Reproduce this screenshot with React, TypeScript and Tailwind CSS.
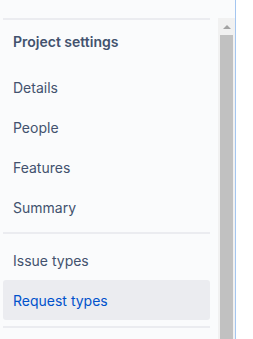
const font = { fontFamily: '"Segoe UI", Inter, "Noto Sans", sans-serif' };

function Item({ label, active }: { label: string; active?: boolean }) {
  return (
    <div
      className={
        "flex h-[40px] items-center rounded-[3px] px-[10px] text-[14px] " +
        (active ? "bg-[#ebecf0] text-[#0052cc]" : "text-[#42526e]")
      }
    >
      {label}
    </div>
  );
}

export default function App() {
  return (
    <div className="flex h-[339px] w-[253px] overflow-hidden bg-white" style={font}>
      <div className="flex w-[235px] bg-[#fafbfc]">
        <div className="flex w-[218px] flex-col overflow-hidden pl-[3px] pr-[8px]">
          {/* header, scrolled out of view */}
          <div className="-mt-[22px] flex h-[40px] shrink-0 items-end gap-[10px] pb-[18px] pl-[16px]">
            <div className="h-[24px] w-[24px] shrink-0 rounded-full bg-[#42526e]" />
            <span className="text-[14px] leading-[16px] font-semibold whitespace-nowrap text-[#42526e]">
              Service project
            </span>
          </div>
          <div className="h-[2px] shrink-0 bg-[#ebecf0]" />
          <div className="mb-[5px] flex h-[42px] shrink-0 items-center px-[10px] text-[14px] font-semibold text-[#42526e]">
            Project settings
          </div>
          <Item label="Details" />
          <Item label="People" />
          <Item label="Features" />
          <Item label="Summary" />
          <div className="mt-[5px] mb-[6px] h-[2px] shrink-0 bg-[#ebecf0]" />
          <Item label="Issue types" />
          <Item label="Request types" active />
          <div className="mt-[6px] h-[2px] shrink-0 bg-[#ebecf0]" />
        </div>
        <div className="mt-[18px] flex w-[17px] flex-col items-center bg-[#f1f1f1]">
          <div className="flex h-[17px] w-full items-center justify-center">
            <div className="h-0 w-0 border-x-[4px] border-b-[4px] border-x-transparent border-b-[#a3a3a3]" />
          </div>
          <div className="w-[13px] flex-1 bg-[#c1c1c1]" />
        </div>
      </div>
      <div className="w-[1px] bg-[#a4c6f0]" />
    </div>
  );
}
